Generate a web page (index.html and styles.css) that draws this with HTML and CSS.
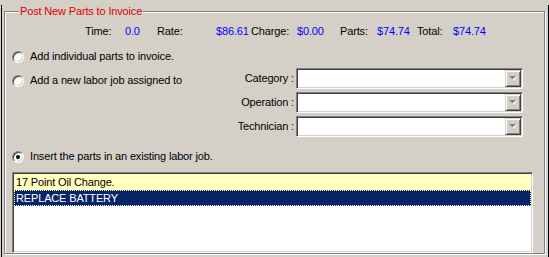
FILE: index.html
```html
<!DOCTYPE html>
<html lang="en">

<head>
    <meta charset="UTF-8">
    <meta name="viewport" content="width=device-width, initial-scale=1.0">
    <title>Post New Parts to Invoice</title>
    <link rel="stylesheet" href="styles.css">
</head>

<body>
    <div class="window">
        <fieldset class="group">
            <legend class="group-title">Post New Parts to Invoice</legend>

            <!-- Totals -->
            <div class="totals">
                <span>Time:</span><span class="value">0.0</span>
                <span>Rate:</span><span class="value">$86.61</span>
                <span>Charge:</span><span class="value">$0.00</span>
                <span>Parts:</span><span class="value">$74.74</span>
                <span>Total:</span><span class="value">$74.74</span>
            </div>

            <label class="option option-first"><span class="radio"></span>Add individual parts to invoice.</label>

            <!-- New labor job -->
            <div class="labor">
                <label class="option option-labor"><span class="radio"></span>Add a new labor job assigned to</label>
                <div class="fields">
                    <span class="field-label">Category :</span>
                    <div class="combo"><span class="combo-btn"><svg width="8" height="5" viewBox="0 0 8 5"><polygon points="1,1 8,1 4.5,4.5" fill="#ffffff"/><polygon points="0,0 7,0 3.5,3.5" fill="#808080"/></svg></span></div>
                    <span class="field-label">Operation :</span>
                    <div class="combo"><span class="combo-btn"><svg width="8" height="5" viewBox="0 0 8 5"><polygon points="1,1 8,1 4.5,4.5" fill="#ffffff"/><polygon points="0,0 7,0 3.5,3.5" fill="#808080"/></svg></span></div>
                    <span class="field-label">Technician :</span>
                    <div class="combo"><span class="combo-btn"><svg width="8" height="5" viewBox="0 0 8 5"><polygon points="1,1 8,1 4.5,4.5" fill="#ffffff"/><polygon points="0,0 7,0 3.5,3.5" fill="#808080"/></svg></span></div>
                </div>
            </div>

            <label class="option option-existing"><span class="radio checked"></span>Insert the parts in an existing labor job.</label>

            <ul class="job-list">
                <li class="job">17 Point Oil Change.</li>
                <li class="job selected">REPLACE BATTERY</li>
            </ul>
        </fieldset>
    </div>
</body>

</html>
```

FILE: styles.css
```css
/* General Styling */
body {
    margin: 0;
    padding: 0;
    background: #d4d0c8;
    font-family: 'Liberation Sans', Arial, sans-serif;
    font-size: 11px;
    line-height: 13px;
    letter-spacing: -0.15px;
    color: #000;
}

.window {
    width: 546px;
    height: 255px;
    margin-left: 1px;
    border-left: 1px solid #000;
    border-right: 1px solid #000;
    border-bottom: 1px solid #000;
}

/* Etched group box */
.group {
    width: 541px;
    box-sizing: border-box;
    margin: 5px 0 0 2px;
    padding: 0 11px 0 7px;
    min-inline-size: 0;
    border: 1px solid #808080;
    box-shadow: inset 1px 1px #fff, 1px 1px #fff;
}

.group-title {
    margin-left: 7px;
    padding: 0 1px;
    background: #d4d0c8;
    color: #e00000;
    line-height: 13px;
}

/* Totals row */
.totals {
    display: grid;
    grid-template-columns: 40px 32px 59px 35px 46px 43px 37px 40px 36px auto;
    margin: 7px 0 0 73px;
}

.value {
    color: #0000ff;
}

/* Radio options */
.option {
    display: flex;
    align-items: center;
    gap: 6px;
    height: 13px;
}

.option-first {
    margin-top: 12px;
}

.option-labor {
    margin-top: 6px;
}

.option-existing {
    margin-top: 13px;
}

.radio {
    position: relative;
    width: 12px;
    height: 12px;
    box-sizing: border-box;
    border-radius: 50%;
    background: #fff;
    border: 1px solid;
    border-color: #808080 #fff #fff #808080;
    box-shadow: inset 1px 1px #404040, inset -1px -1px #d4d0c8;
}

.radio.checked::after {
    content: "";
    position: absolute;
    left: 3px;
    top: 3px;
    width: 4px;
    height: 4px;
    border-radius: 50%;
    background: #000;
}

/* Labor job fields */
.labor {
    display: flex;
    align-items: flex-start;
    margin-top: 5px;
}

.fields {
    display: grid;
    grid-template-columns: auto 227px;
    column-gap: 2px;
    row-gap: 3px;
    align-items: center;
    margin: 0 10px 0 auto;
}

.field-label {
    text-align: right;
}

.combo {
    display: flex;
    justify-content: flex-end;
    height: 21px;
    box-sizing: border-box;
    padding: 1px;
    background: #fff;
    border: 1px solid;
    border-color: #808080 #fff #fff #808080;
    box-shadow: inset 1px 1px #404040, inset -1px -1px #d4d0c8;
}

.combo-btn {
    display: flex;
    align-items: center;
    justify-content: center;
    width: 16px;
    height: 17px;
    box-sizing: border-box;
    background: #d4d0c8;
    border: 1px solid;
    border-color: #d4d0c8 #404040 #404040 #d4d0c8;
    box-shadow: inset 1px 1px #fff, inset -1px -1px #808080;
}

/* Existing jobs list */
.job-list {
    list-style: none;
    height: 81px;
    box-sizing: border-box;
    margin: 9px 0 0 0;
    padding: 1px;
    background: #fff;
    border: 1px solid;
    border-color: #808080 #fff #fff #808080;
    box-shadow: inset 1px 1px #404040, inset -1px -1px #d4d0c8;
}

.job {
    height: 16px;
    line-height: 16px;
    padding-left: 2px;
    background: #ffffc0;
}

.job.selected {
    background: #0a246a;
    color: #fff;
    outline: 1px dotted #ffffc0;
    outline-offset: -1px;
}
```
